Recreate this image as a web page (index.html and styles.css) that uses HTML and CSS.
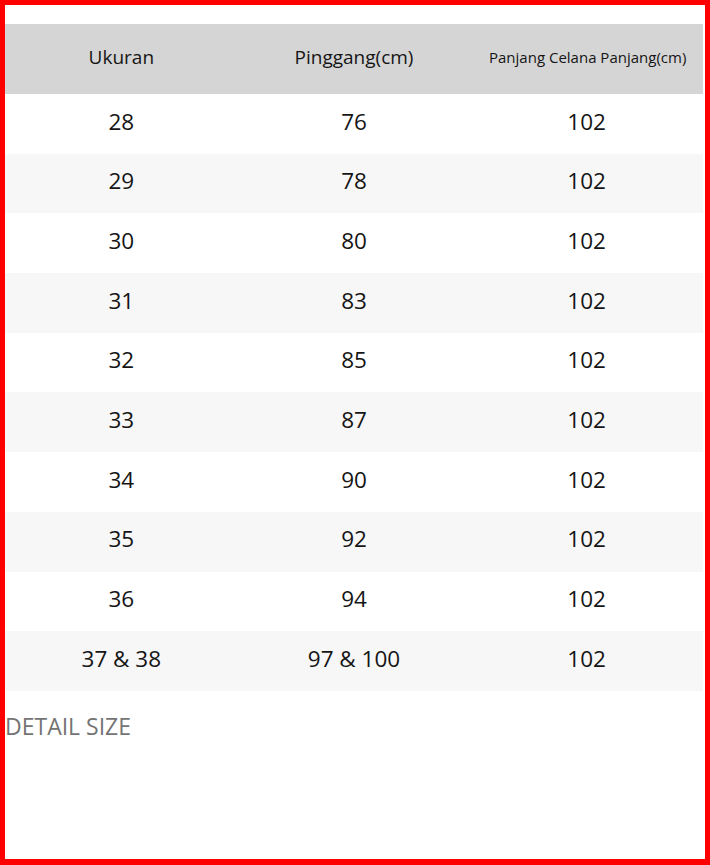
FILE: index.html
```html
<!DOCTYPE html>
<html lang="id">
<head>
<meta charset="utf-8">
<title>Size Chart</title>
<link rel="stylesheet" href="styles.css">
</head>
<body>
<main class="frame">
  <div class="chart">
    <div class="row head">
      <div class="cell h1">Ukuran</div>
      <div class="cell h2">Pinggang(cm)</div>
      <div class="cell h3">Panjang Celana Panjang(cm)</div>
    </div>
    <div class="row"><div class="cell">28</div><div class="cell">76</div><div class="cell">102</div></div>
    <div class="row alt"><div class="cell">29</div><div class="cell">78</div><div class="cell">102</div></div>
    <div class="row"><div class="cell">30</div><div class="cell">80</div><div class="cell">102</div></div>
    <div class="row alt"><div class="cell">31</div><div class="cell">83</div><div class="cell">102</div></div>
    <div class="row"><div class="cell">32</div><div class="cell">85</div><div class="cell">102</div></div>
    <div class="row alt"><div class="cell">33</div><div class="cell">87</div><div class="cell">102</div></div>
    <div class="row"><div class="cell">34</div><div class="cell">90</div><div class="cell">102</div></div>
    <div class="row alt"><div class="cell">35</div><div class="cell">92</div><div class="cell">102</div></div>
    <div class="row"><div class="cell">36</div><div class="cell">94</div><div class="cell">102</div></div>
    <div class="row alt"><div class="cell">37 &amp; 38</div><div class="cell">97 &amp; 100</div><div class="cell">102</div></div>
  </div>
  <p class="detail">DETAIL SIZE</p>
</main>
</body>
</html>
```

FILE: styles.css
```css
html, body {
  margin: 0;
  padding: 0;
  background: #ffffff;
}
.frame {
  box-sizing: border-box;
  width: 710px;
  height: 865px;
  border: 5px solid #ff0000;
  border-bottom-width: 6px;
  padding: 19px 2px 0 0;
  font-family: "Open Sans", "Noto Sans", sans-serif;
  color: #151515;
}
.chart {
  display: flex;
  flex-direction: column;
}
.row {
  display: grid;
  grid-template-columns: 1fr 1fr 1fr;
  height: 59.7px;
  align-items: center;
  background: #ffffff;
}
.row.alt {
  background: #f7f7f7;
}
.row.head {
  height: 70px;
  background: #d5d5d5;
}
.cell {
  text-align: center;
  font-size: 22.5px;
  font-weight: 450;
  line-height: 1;
  padding-bottom: 4px;
  white-space: nowrap;
}
.head .cell {
  font-size: 19px;
  padding-bottom: 3px;
}
.head .h3 {
  font-size: 15px;
  padding-left: 2px;
}
.detail {
  margin: 0;
  padding-top: 22px;
  font-size: 23px;
  line-height: 26px;
  color: #747474;
}
```
